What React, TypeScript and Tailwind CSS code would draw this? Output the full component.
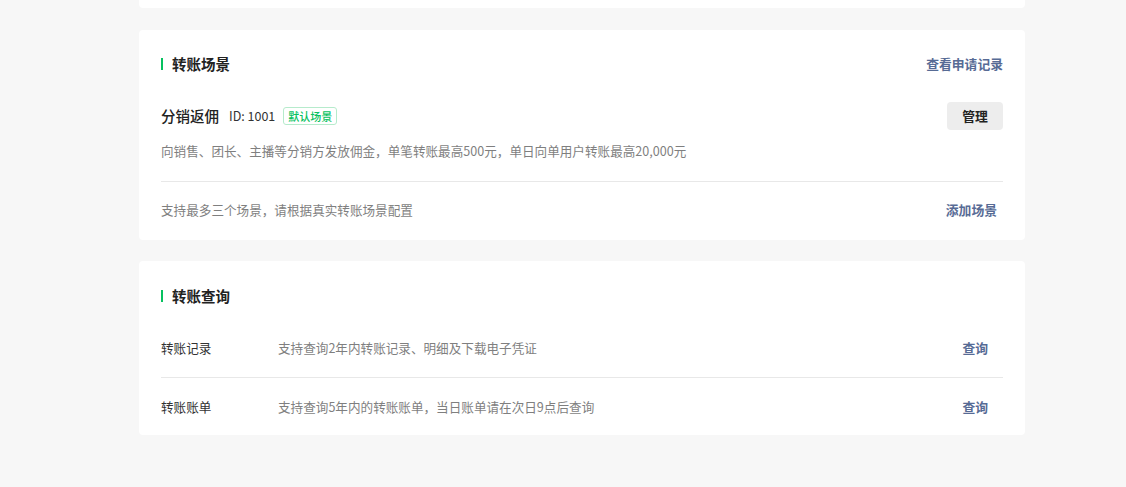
const FONT = { fontFamily: '"Noto Sans CJK SC", "Noto Sans", sans-serif' };

function SectionTitle({ children }: { children: string }) {
  return (
    <div className="flex h-5 items-center">
      <span className="mr-[9px] h-[12px] w-[2px] bg-[#07c160]" />
      <h2 className="text-[14.5px] font-semibold leading-5 text-[#222]">{children}</h2>
    </div>
  );
}

function LinkText({ children, className = "" }: { children: string; className?: string }) {
  return (
    <a href="#" className={`text-[12.8px] font-semibold leading-5 text-[#576b95] ${className}`}>
      {children}
    </a>
  );
}

const queryRows = [
  { label: "转账记录", desc: "支持查询2年内转账记录、明细及下载电子凭证" },
  { label: "转账账单", desc: "支持查询5年内的转账账单，当日账单请在次日9点后查询" },
];

export default function App() {
  return (
    <div className="min-h-[487px] bg-[#f7f7f7] pb-[52px]" style={FONT}>
      <div className="ml-[139px] flex w-[886px] flex-col">
        {/* tail of previous card */}
        <div className="h-[8px] rounded-b bg-white" />

        {/* 转账场景 */}
        <section className="mt-[22px] rounded bg-white px-[22px] pt-6 pb-5">
          <div className="flex items-center justify-between">
            <SectionTitle>转账场景</SectionTitle>
            <LinkText>查看申请记录</LinkText>
          </div>

          <div className="mt-7 flex items-center justify-between">
            <div className="flex items-center">
              <span className="text-[14.5px] font-medium leading-5 text-[#222]">分销返佣</span>
              <span className="ml-[10px] text-[12.5px] leading-5 text-[#333]">ID: 1001</span>
              <span className="ml-[8px] rounded-[3px] border border-[#b6ebcc] px-[4px] text-[11px] font-medium leading-4 text-[#07c160]">
                默认场景
              </span>
            </div>
            <button
              type="button"
              className="h-7 w-14 rounded bg-[#ededed] text-[12.8px] font-semibold text-[#222]"
            >
              管理
            </button>
          </div>
          <p className="mt-[11px] text-[12.6px] leading-5 text-[#7f7f7f]">
            向销售、团长、主播等分销方发放佣金，单笔转账最高500元，单日向单用户转账最高20,000元
          </p>

          <div className="mt-5 flex items-center justify-between border-t border-[#e8e8e8] pt-[18px]">
            <p className="text-[12.6px] leading-5 text-[#7f7f7f]">支持最多三个场景，请根据真实转账场景配置</p>
            <LinkText className="mr-[6px]">添加场景</LinkText>
          </div>
        </section>

        {/* 转账查询 */}
        <section className="mt-[21px] rounded bg-white px-[22px] pt-[25px]">
          <SectionTitle>转账查询</SectionTitle>
          <div className="mt-[13px]">
            {queryRows.map((row, i) => (
              <div
                key={row.label}
                className={[
                  "flex h-[58px] items-center",
                  i > 0 ? "border-t border-[#e8e8e8]" : "",
                ].join(" ")}
              >
                <span className="w-[117px] text-[12.6px] leading-5 text-[#333]">{row.label}</span>
                <span className="flex-1 text-[12.6px] leading-5 text-[#7f7f7f]">{row.desc}</span>
                <LinkText className="mr-[15px]">查询</LinkText>
              </div>
            ))}
          </div>
        </section>
      </div>
    </div>
  );
}
